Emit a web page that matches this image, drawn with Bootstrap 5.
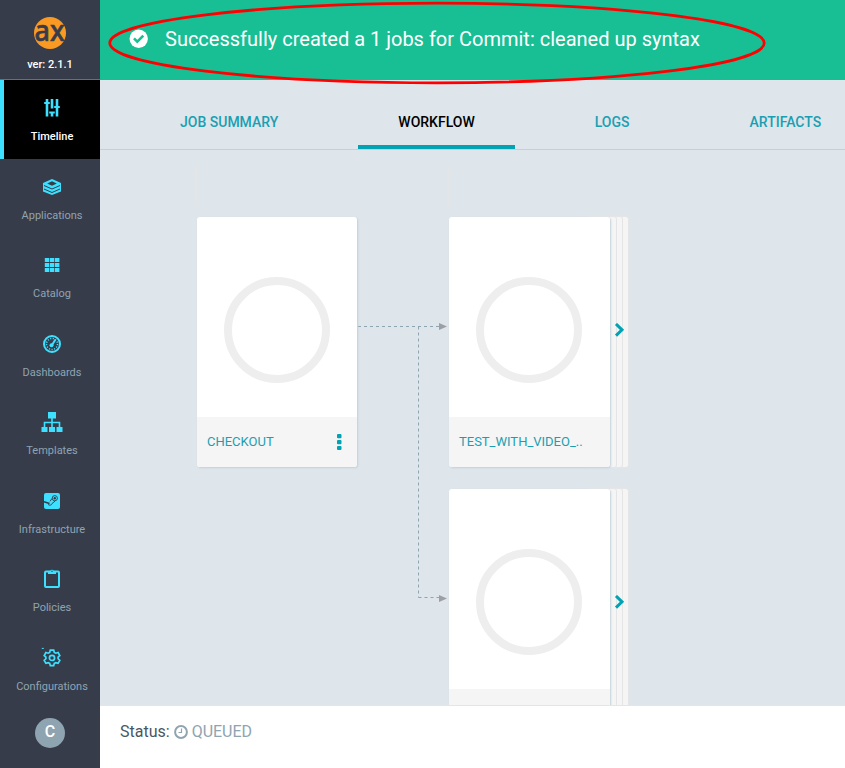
<!DOCTYPE html>
<html lang="en">
<head>
<meta charset="utf-8">
<meta name="viewport" content="width=device-width, initial-scale=1">
<title>Timeline - Workflow</title>
<link href="https://cdn.jsdelivr.net/npm/bootstrap@5.3.0/dist/css/bootstrap.min.css" rel="stylesheet">
<style>
body{font-family:Roboto,"Liberation Sans",sans-serif;background:#dee5eb;height:768px}
svg{display:block}
.side-nav{width:100px;background:#373c4b}
.brand-box{height:80px;border-bottom:1px solid #6b6f79;color:#fff;font-size:11px;line-height:14px;padding-top:17px;font-weight:500}
.brand-box svg{overflow:visible}
.brand-box span{margin-top:9px}
.side-item{height:78.57px;border-left:4px solid transparent;color:#8fa4b1;font-size:11px;line-height:14px;padding-top:18px;text-decoration:none}
.side-item svg{width:22px;height:20px;color:#3de1ff;margin-bottom:12px;overflow:visible}
.side-item.current{background:#000;border-color:#3de1ff;color:#fff;font-weight:500}
.avatar{width:30px;height:30px;background:#8fa4b1;color:#fff;font-size:16px;font-weight:500;line-height:28px;margin:9px auto 0}
.notice{height:80px;background:#18be94;color:#fff;font-size:20px;padding:0 0 2px 29px}
.notice svg{margin-right:16px}
.ring-mark{left:8px;top:0;z-index:3;pointer-events:none}
.tab-row{height:70px;border-bottom:1px solid #c6cfd5;padding-left:40px;gap:40px;font-size:14px;font-weight:500}
.tab-row a{color:#1a9fb2;text-decoration:none;padding:6px 40px 0;border-bottom:4px solid transparent;height:69px;line-height:73px}
.tab-row a.current{color:#000;border-color:#00a2b3}
.flow-canvas{min-height:0}
.edges{left:0;top:0}
.node{width:160px;height:250px;border-radius:3px;background:#fff;box-shadow:1px 1px 2px #c3d0d9;z-index:1}
.group-wrap .node{width:161px}
.node-ring{width:106px;height:106px;border:8px solid #eee;border-radius:50%;margin:60px 27px 34px}
.node-foot{height:50px;background:#f5f5f5;color:#1a9fb2;font-size:13px;padding:0 14px 0 10px;border-radius:0 0 3px 3px}
.n1{left:97px;top:67px}.n2{left:349px;top:67px}.n3{left:349px;top:339px}
.stack-layer{top:-1px;height:252px;width:30px;background:#f5f5f5;border:1px solid #e5e5e5;border-radius:3px}
.group-wrap{z-index:0;width:180px;height:250px}
.l3{left:150px}.l2{left:144px}.l1{left:138px}
.chev{left:165px;top:106px;z-index:2}
.status-bar{height:63px;border-top:1px solid #e3e5e7;background:#fff;padding:14px 0 0 20px;font-size:16px;line-height:24px;color:#495763}
.status-bar svg{margin:0 4px 0 4px}
.queued{color:#8fa4b1}
</style>
<script src="https://cdn.jsdelivr.net/npm/bootstrap@5.3.0/dist/js/bootstrap.bundle.min.js"></script>
</head>
<body class="d-flex overflow-hidden">
<nav class="side-nav d-flex flex-column flex-shrink-0">
  <div class="brand-box d-flex flex-column align-items-center flex-shrink-0">
    <svg width="34" height="32" viewBox="0 0 34 32"><circle cx="17" cy="16" r="16" fill="#fb9a22"/><text x="1.500" y="23.500" textLength="30" lengthAdjust="spacingAndGlyphs" font-family="Noto Sans" font-size="28" fill="#373c4b" stroke="#373c4b" stroke-width=".6">ax</text></svg>
    <span>ver: 2.1.1</span>
  </div>
  <a class="side-item current d-flex flex-column align-items-center flex-shrink-0" href="#">
    <svg viewBox="0 0 22 20" fill="none" stroke="currentColor" stroke-width="2.600"><path d="M6 1v17.500M11 1v9.500M11 14v4.500M16 1v17.500"/><path d="M3.200 5h5.600M8.200 14.500h5.600M13.200 9h5.600" stroke-width="2.200"/></svg>Timeline</a>
  <a class="side-item d-flex flex-column align-items-center flex-shrink-0" href="#">
    <svg viewBox="0 0 22 20"><path d="M11 2 2 6v8.500L11 18l9-3.500V6z" fill="currentColor"/><path d="M11 4.200 15.800 6.500 11 8.800 6.200 6.500z" fill="#373c4b"/><path d="M3 8.500 11 12l8-3.500M3 12l8 3.500 8-3.500" fill="none" stroke="#373c4b" stroke-width="1"/></svg>Applications</a>
  <a class="side-item d-flex flex-column align-items-center flex-shrink-0" href="#">
    <svg viewBox="0 0 22 20" fill="currentColor"><path d="M3.800 3h4.400v4H3.800zM8.900 3h4.400v4H8.900zM14 3h4.400v4H14zM3.800 8h4.400v4H3.800zM8.900 8h4.400v4H8.900zM14 8h4.400v4H14zM3.800 13h4.400v4H3.800zM8.900 13h4.400v4H8.900zM14 13h4.400v4H14z"/></svg>Catalog</a>
  <a class="side-item d-flex flex-column align-items-center flex-shrink-0" href="#">
    <svg viewBox="0 0 22 20" fill="none" stroke="currentColor"><circle cx="11" cy="10" r="8" stroke-width="2"/><circle cx="11" cy="10" r="5.500" stroke-width="1.500" stroke-dasharray="1.100 1.500"/><path d="m11 11 3.500-5.500" stroke-width="2"/><circle cx="10.500" cy="11.200" r="2" fill="currentColor" stroke="none"/></svg>Dashboards</a>
  <a class="side-item d-flex flex-column align-items-center flex-shrink-0" href="#">
    <svg viewBox="0 0 22 20"><path d="M7 0h8v6.500H7zM.5 15h6v5h-6zM8 15h6v5H8zM15.500 15h6v5h-6z" fill="currentColor"/><path d="M11 6v10M3.500 16v-5.500h15V16" fill="none" stroke="currentColor" stroke-width="1.600"/></svg>Templates</a>
  <a class="side-item d-flex flex-column align-items-center flex-shrink-0" href="#">
    <svg viewBox="0 0 22 20"><rect x="3" y="2" width="16" height="16" rx="2" fill="currentColor"/><g fill="none" stroke="#373c4b"><circle cx="13.800" cy="7.200" r="2.600" stroke-width=".9"/><path d="M3 10.700 8.500 12.500" stroke-width="1.600"/><path d="M7 13.200a2.200 2.200 0 0 0 4-.7l3.200-2.500M11 7.500l-2 2.800" stroke-width=".9"/></g><circle cx="13.800" cy="7.200" r="1.200" fill="#373c4b"/></svg>Infrastructure</a>
  <a class="side-item d-flex flex-column align-items-center flex-shrink-0" href="#">
    <svg viewBox="0 0 22 20"><rect x="4" y="2.500" width="14" height="15.500" rx="1" fill="none" stroke="currentColor" stroke-width="2"/><path d="M7 2h2.200a2 2 0 0 1 3.600 0H15v3H7z" fill="currentColor"/><circle cx="11" cy="2.300" r=".7" fill="#373c4b"/></svg>Policies</a>
  <a class="side-item d-flex flex-column align-items-center flex-shrink-0" href="#">
    <svg viewBox="0 0 22 20" fill="none" stroke="currentColor" stroke-width="1.700"><g transform="translate(0 -.6)"><path d="M9.300 2.700h3.400l.6 2.300 1.500.8 2.300-.7 1.700 3-1.700 1.600v1.600l1.700 1.600-1.700 3-2.300-.7-1.500.8-.6 2.200H9.300L8.700 16l-1.500-.8-2.300.7-1.700-3 1.700-1.600V9.700L3.200 8.100l1.700-3 2.300.7L8.700 5z"/><circle cx="11" cy="10.500" r="2.600"/><path d="M.8 1h2" stroke-width="1"/></g></svg>Configurations</a>
  <div class="avatar rounded-circle text-center flex-shrink-0">C</div>
</nav>
<main class="d-flex flex-column flex-grow-1 position-relative">
  <div class="notice d-flex align-items-center flex-shrink-0">
    <svg width="20" height="20" viewBox="0 0 20 20"><circle cx="9.700" cy="9.700" r="9.200" fill="#fff"/><path d="m5 9.300 3.300 3.300 6-6" fill="none" stroke="#18be94" stroke-width="2.600"/></svg>
    <span>Successfully created a 1 jobs for Commit: cleaned up syntax</span>
  </div>
  <svg class="ring-mark position-absolute" width="660" height="87"><ellipse cx="329" cy="43" rx="327.200" ry="39.800" fill="none" stroke="red" stroke-width="2.800"/></svg>
  <div class="tab-row d-flex flex-shrink-0 text-nowrap">
    <a href="#">JOB SUMMARY</a><a href="#" class="current">WORKFLOW</a><a href="#">LOGS</a><a href="#" class="pe-0">ARTIFACTS</a>
  </div>
  <div class="flow-canvas flex-grow-1 position-relative overflow-hidden">
    <svg class="edges position-absolute" width="745" height="555" fill="none"><path d="M96.500 16v40M348.500 16v40" stroke="#e4e5e7"/><path d="M258 176.500h81M318.500 176.500v271M318.500 447.500h21" stroke="#8fa4b1" stroke-dasharray="3 3"/><path d="m339 173 8 3.500-8 3.500zM339 445l8 3.500-8 3.500z" fill="#9c9fa5"/></svg>
    <div class="node n1 position-absolute d-flex flex-column"><div class="node-ring"></div>
      <div class="node-foot d-flex align-items-center justify-content-between"><span>CHECKOUT</span><svg width="8" height="16" viewBox="0 0 8 16" fill="#00a2b3"><rect x="2" width="4.500" height="4.300" rx="1"/><rect x="2" y="6" width="4.500" height="4.300" rx="1"/><rect x="2" y="12" width="4.500" height="4" rx="1"/></svg></div></div>
    <div class="group-wrap n2 position-absolute">
      <div class="stack-layer l3 position-absolute"></div><div class="stack-layer l2 position-absolute"></div><div class="stack-layer l1 position-absolute"></div>
      <div class="node position-relative d-flex flex-column"><div class="node-ring"></div><div class="node-foot d-flex align-items-center"><span>TEST_WITH_VIDEO_..</span></div></div>
      <svg class="chev position-absolute" width="12" height="14" fill="none" stroke="#00a2b3" stroke-width="3"><path d="m2 1 6 5.800L2 12.600"/></svg>
    </div>
    <div class="group-wrap n3 position-absolute">
      <div class="stack-layer l3 position-absolute"></div><div class="stack-layer l2 position-absolute"></div><div class="stack-layer l1 position-absolute"></div>
      <div class="node position-relative d-flex flex-column"><div class="node-ring"></div><div class="node-foot"></div></div>
      <svg class="chev position-absolute" width="12" height="14" fill="none" stroke="#00a2b3" stroke-width="3"><path d="m2 1 6 5.800L2 12.600"/></svg>
    </div>
  </div>
  <div class="status-bar d-flex align-items-start flex-shrink-0"><span>Status:</span>
    <span class="queued d-flex align-items-center"><svg width="14" height="14" viewBox="0 0 14 14" fill="none" stroke="currentColor"><circle cx="7" cy="7" r="5.900" stroke-width="2"/><path d="M7.500 3.500v4H4.500" stroke-width="1.200"/></svg>QUEUED</span>
  </div>
</main>
</body>
</html>
